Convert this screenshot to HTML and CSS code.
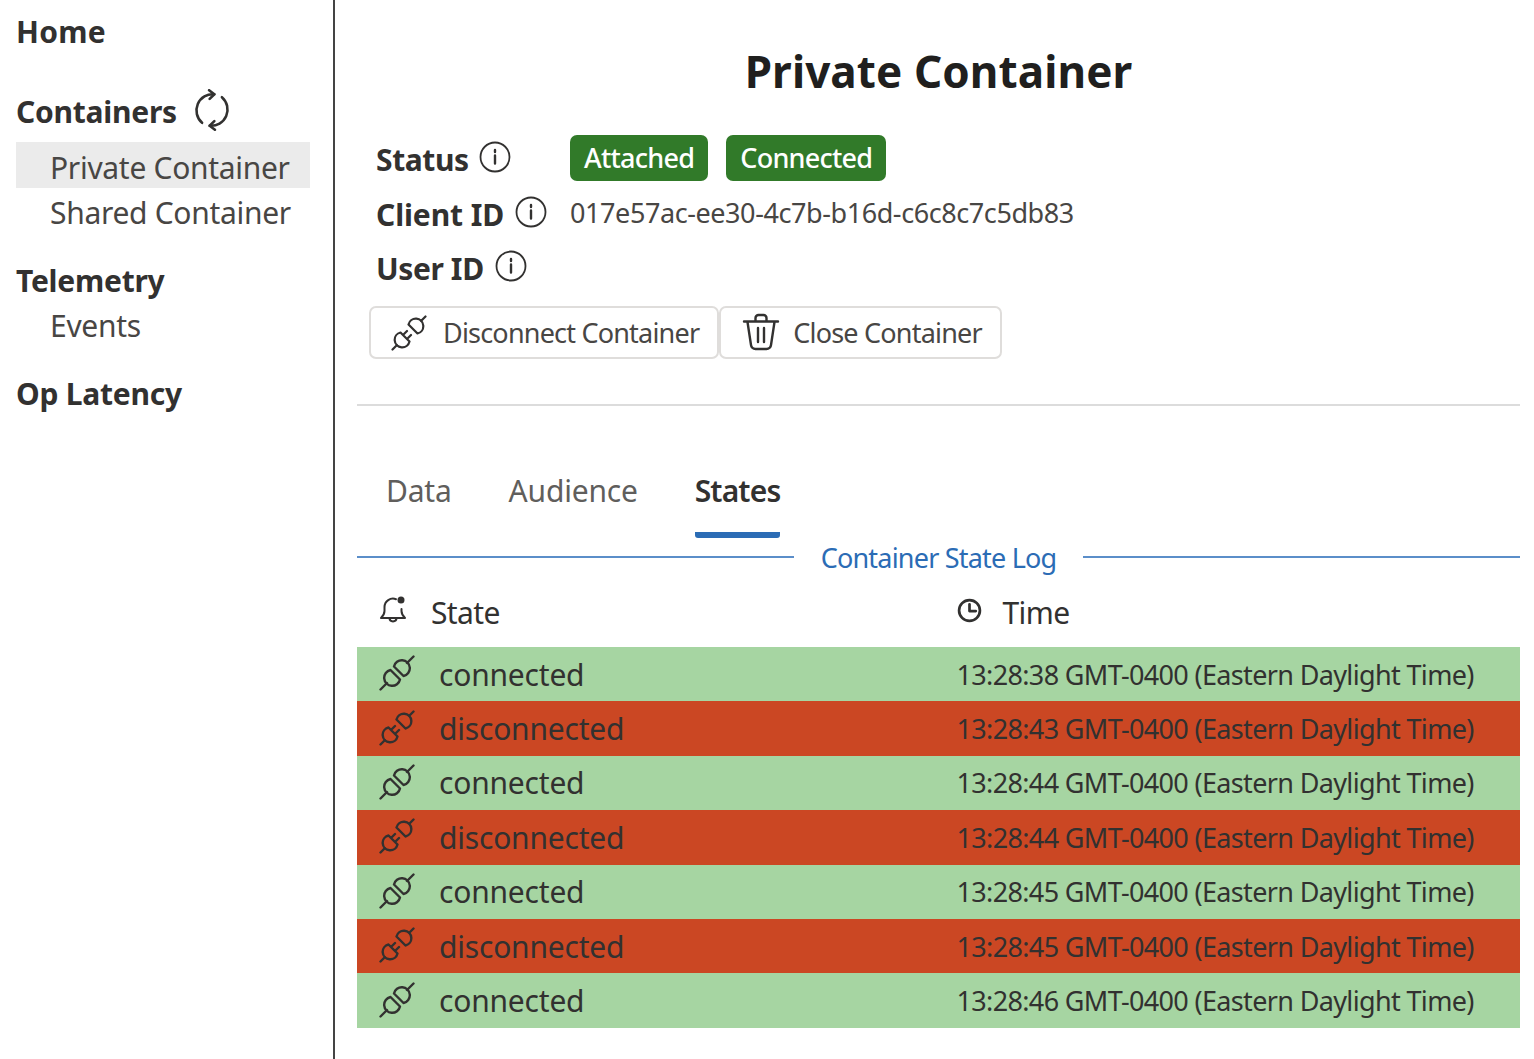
FILE: index.html
```html
<!DOCTYPE html>
<html lang="en">
<head>
    <meta charset="UTF-8">
    <title>Private Container</title>
    <link rel="stylesheet" href="styles.css">
</head>
<body>
    <svg class="defs" width="0" height="0">
        <symbol id="plug-on" viewBox="0 0 36 36">
            <path d="M11.500 15l9.500 9.500A8 8 0 1 1 11.500 15zM8 28l-6.500 6.500"/>
            <path d="M15 11.500l9.500 9.500A8 8 0 1 0 15 11.500zM28 8l6.500-6.500"/>
        </symbol>
        <symbol id="plug-off" viewBox="0 0 36 36">
            <path d="M9.500 17.500l9 9A7.500 7.500 0 1 1 9.500 17.500zM12 20l4-4M16 24l4-4M6 30l-4.500 4.500"/>
            <path d="M17.500 9.500l9 9A7.500 7.500 0 1 0 17.500 9.500zM30 6l4.500-4.500"/>
        </symbol>
        <symbol id="info" viewBox="0 0 32 32">
            <circle cx="16" cy="16" r="14.500"/>
            <path class="thick" d="M16 14.500v8M16 9v2"/>
        </symbol>
    </svg>

    <nav class="sidebar">
        <h2 class="nav-home">Home</h2>
        <div class="nav-title">
            <h2>Containers</h2>
            <svg class="icon refresh" viewBox="0 0 36 36">
                <path d="M20 4.500A14 14 0 0 0 9.500 29M16 31.500A14 14 0 0 0 26.500 7"/>
                <path d="M15.500 1l4.500 3.500-4 4M20.500 35L16 31.500l4-4"/>
            </svg>
        </div>
        <a class="nav-item selected">Private Container</a>
        <a class="nav-item">Shared Container</a>
        <h2 class="nav-group">Telemetry</h2>
        <a class="nav-item nav-events">Events</a>
        <h2 class="nav-group">Op Latency</h2>
    </nav>

    <main class="content">
        <h1>Private Container</h1>

        <div class="field field-status">
            <div class="field-label">Status <svg class="icon info"><use href="#info"/></svg></div>
            <span class="badge">Attached</span>
            <span class="badge">Connected</span>
        </div>
        <div class="field field-client">
            <div class="field-label">Client ID <svg class="icon info"><use href="#info"/></svg></div>
            <span class="client-id">017e57ac-ee30-4c7b-b16d-c6c8c7c5db83</span>
        </div>
        <div class="field field-user">
            <div class="field-label">User ID <svg class="icon info"><use href="#info"/></svg></div>
        </div>

        <div class="actions">
            <button class="btn btn-disconnect"><svg class="icon btn-icon"><use href="#plug-off"/></svg>Disconnect Container</button>
            <button class="btn btn-close">
                <svg class="icon trash-icon" viewBox="0 0 40 40">
                    <path d="M3 8.500h34M6.500 9l3.500 23a4.500 4.500 0 0 0 4.500 4h11a4.500 4.500 0 0 0 4.500-4l3.500-23M14.500 8.500V5a3 3 0 0 1 3-3h5a3 3 0 0 1 3 3v3.500M17 15v14M23 15v14"/>
                </svg>Close Container</button>
        </div>

        <hr class="divider">

        <div class="tabs">
            <span class="tab">Data</span>
            <span class="tab">Audience</span>
            <span class="tab active">States</span>
        </div>

        <div class="log-title"><span>Container State Log</span></div>

        <div class="log-head">
            <div class="log-head-cell head-state">
                <svg class="icon head-icon" viewBox="0 0 28 28">
                    <path d="M17 3.200A8.500 8.500 0 0 0 5.500 11v4c0 3-1.500 5-3.500 7h24c-2-2-3.500-4-3.500-7v-2M10.500 22c0 4.500 7 4.500 7 0"/>
                    <circle class="dot" cx="22" cy="4" r="3.500"/>
                </svg>State
            </div>
            <div class="log-head-cell head-time">
                <svg class="icon head-icon clock" viewBox="0 0 24 24">
                    <circle cx="12" cy="12" r="10"/>
                    <path d="M12 6v6.500h6"/>
                </svg>Time
            </div>
        </div>

        <div class="log-row on"><div class="state"><svg class="icon row-icon"><use href="#plug-on"/></svg>connected</div><div class="time">13:28:38 GMT-0400 (Eastern Daylight Time)</div></div>
        <div class="log-row off"><div class="state"><svg class="icon row-icon"><use href="#plug-off"/></svg>disconnected</div><div class="time">13:28:43 GMT-0400 (Eastern Daylight Time)</div></div>
        <div class="log-row on"><div class="state"><svg class="icon row-icon"><use href="#plug-on"/></svg>connected</div><div class="time">13:28:44 GMT-0400 (Eastern Daylight Time)</div></div>
        <div class="log-row off"><div class="state"><svg class="icon row-icon"><use href="#plug-off"/></svg>disconnected</div><div class="time">13:28:44 GMT-0400 (Eastern Daylight Time)</div></div>
        <div class="log-row on"><div class="state"><svg class="icon row-icon"><use href="#plug-on"/></svg>connected</div><div class="time">13:28:45 GMT-0400 (Eastern Daylight Time)</div></div>
        <div class="log-row off"><div class="state"><svg class="icon row-icon"><use href="#plug-off"/></svg>disconnected</div><div class="time">13:28:45 GMT-0400 (Eastern Daylight Time)</div></div>
        <div class="log-row on"><div class="state"><svg class="icon row-icon"><use href="#plug-on"/></svg>connected</div><div class="time">13:28:46 GMT-0400 (Eastern Daylight Time)</div></div>
    </main>
</body>
</html>
```

FILE: styles.css
```css
* {
    box-sizing: border-box;
}
body {
    font-family: "Noto Sans", "Open Sans", sans-serif;
    margin: 0;
    height: 1059px;
    overflow: hidden;
    display: flex;
    background-color: #fff;
    color: #323130;
}
.defs {
    display: none;
}
.icon {
    fill: none;
    stroke: #323130;
    stroke-width: 2;
    stroke-linecap: round;
    stroke-linejoin: round;
    flex-shrink: 0;
}

/* Sidebar */
.sidebar {
    width: 335px;
    height: 100%;
    border-right: 2px solid #444;
    padding: 11px 23px 0 16px;
}
.sidebar h2 {
    font-size: 30px;
    line-height: 42px;
    margin: 0;
    font-weight: 700;
    letter-spacing: -0.25px;
}
.sidebar .nav-home {
    letter-spacing: 0.3px;
}
.nav-title {
    display: flex;
    align-items: center;
    gap: 14px;
    margin-top: 37px;
    height: 44px;
}
.refresh {
    width: 42px;
    height: 42px;
    margin-top: -4px;
    stroke-width: 2.200;
}
.nav-item {
    display: block;
    height: 46px;
    padding-left: 34px;
    font-size: 30px;
    line-height: 50px;
    letter-spacing: -0.3px;
    color: #484644;
}
.nav-item.selected {
    background-color: #ebebeb;
    margin-top: 8px;
    line-height: 52px;
}
.sidebar .nav-group {
    margin-top: 26px;
}
.nav-events {
    margin-top: -1px;
}

/* Main */
.content {
    flex: 1;
    padding: 0 14px 0 22px;
}
h1 {
    font-size: 44px;
    line-height: 60px;
    font-weight: 700;
    text-align: center;
    margin: 41px 0 0;
    letter-spacing: 0.1px;
    color: #201f1e;
}
.field {
    display: flex;
    align-items: center;
    height: 54px;
    padding-left: 19px;
}
.field-status {
    margin-top: 30px;
}
.field-client {
    margin-top: 2px;
}
.field-label {
    display: flex;
    align-items: center;
    gap: 11px;
    font-size: 30px;
    font-weight: 700;
    letter-spacing: -0.4px;
}
.field-status .field-label {
    width: 194px;
    margin-top: 2px;
    gap: 10px;
}
.field-client .field-label {
    width: 194px;
    letter-spacing: -0.1px;
}
.info {
    width: 32px;
    height: 32px;
    stroke-width: 1.800;
    margin-top: -5px;
}
.field-status .info {
    margin-top: -4px;
}
.thick {
    stroke-width: 2.400;
}
.badge {
    display: inline-block;
    height: 46px;
    line-height: 46px;
    padding: 0 14px;
    margin-right: 18px;
    border-radius: 7px;
    background-color: #317a29;
    color: #fff;
    font-size: 27px;
    font-weight: 500;
    letter-spacing: -0.75px;
}
.client-id {
    font-size: 27px;
    letter-spacing: -0.42px;
    margin-top: -3px;
    color: #484644;
}
.actions {
    display: flex;
    margin: 11px 0 0 12px;
}
.btn {
    display: flex;
    align-items: center;
    height: 53px;
    padding: 0 18px 0 20px;
    gap: 16px;
    background: #fff;
    border: 2px solid #dfdddb;
    border-radius: 7px;
    font-family: inherit;
    font-size: 27px;
    letter-spacing: -0.8px;
    color: #484644;
}
.btn-close {
    gap: 12px;
}
.btn-icon {
    width: 36px;
    height: 36px;
    stroke-width: 2.200;
}
.trash-icon {
    width: 40px;
    height: 40px;
    stroke-width: 2.400;
}
.divider {
    border: 0;
    border-top: 2px solid #dcdcdc;
    margin: 45px 0 0;
}

/* Tabs */
.tabs {
    display: flex;
    gap: 57px;
    padding: 45px 0 0 29px;
}
.tab {
    height: 87px;
    font-size: 30px;
    line-height: 80px;
    letter-spacing: -0.2px;
    color: #605e5c;
    border-bottom: 6px solid transparent;
    border-radius: 0 0 3px 3px;
}
.tab.active {
    font-weight: 600;
    letter-spacing: -0.85px;
    color: #323130;
    border-bottom-color: #2b6cb5;
}

/* State log */
.log-title {
    display: flex;
    align-items: center;
    gap: 27px;
    height: 44px;
    margin-top: -3px;
    font-size: 27px;
    letter-spacing: -0.8px;
    color: #2b6cb5;
}
.log-title::before,
.log-title::after {
    content: "";
    flex: 1;
    border-top: 2px solid #5b8ec9;
}
.log-head {
    display: grid;
    grid-template-columns: 1fr 1fr;
    height: 68px;
    align-items: center;
    padding-bottom: 2px;
}
.log-head-cell {
    display: flex;
    align-items: center;
    font-size: 30px;
    letter-spacing: -0.6px;
}
.head-state {
    padding-left: 22px;
    gap: 24px;
}
.head-time {
    padding-left: 18px;
    gap: 21px;
}
.head-icon {
    width: 28px;
    height: 30px;
    margin-top: -4px;
    stroke-width: 2;
}
.head-icon.clock {
    width: 25px;
    height: 25px;
    stroke-width: 2.600;
}
.dot {
    fill: #323130;
    stroke: none;
}
.log-row {
    display: grid;
    grid-template-columns: 1fr 1fr;
    align-items: center;
    height: 54.400px;
    color: #323130;
}
.log-row.on {
    background-color: #a6d5a2;
}
.log-row.off {
    background-color: #cb4723;
}
.state {
    display: flex;
    align-items: center;
    gap: 24px;
    padding-left: 22px;
    font-size: 30px;
    letter-spacing: -0.2px;
}
.row-icon {
    width: 36px;
    height: 36px;
    margin-top: -2px;
    stroke-width: 2.400;
}
.time {
    padding-left: 18px;
    font-size: 27px;
    letter-spacing: -0.65px;
}
```
